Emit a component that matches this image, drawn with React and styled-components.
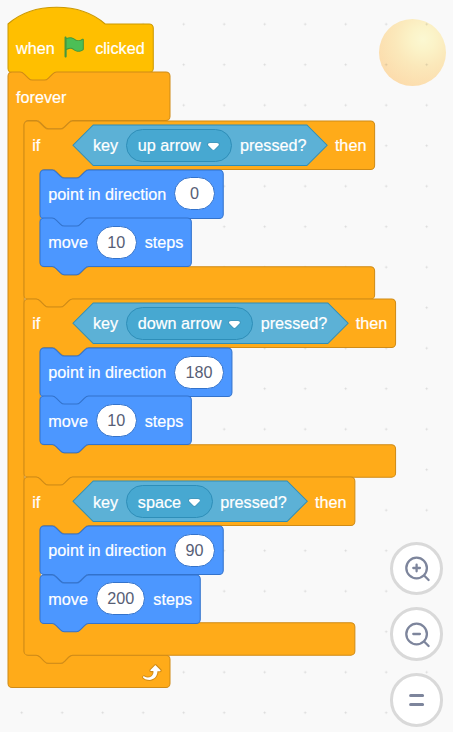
import React from 'react';
import styled, { createGlobalStyle } from 'styled-components';

const SCALE = 1.0125;
const u = (n) => `${n * SCALE}px`;

const palette = {
  event: { fill: '#ffbf00', stroke: '#cc9900' },
  control: { fill: '#ffab19', stroke: '#cf8b17' },
  motion: { fill: '#4c97ff', stroke: '#3373cc' },
  sensing: { fill: '#5cb1d6', stroke: '#2e8eb8', field: '#47a8d1' },
};

const GlobalStyle = createGlobalStyle`
  body {
    margin: 0;
    background: #f9f9f9;
  }
`;

const Workspace = styled.main`
  position: relative;
  box-sizing: border-box;
  width: 453px;
  height: 732px;
  padding: 23.8px 0 0 7.9px;
  overflow: hidden;
  background: #f9f9f9;
  font-family: 'Liberation Sans', Arial, sans-serif;
  font-size: ${u(16)};
  color: #fff;
`;

const Sun = styled.div`
  position: absolute;
  left: 378.8px;
  top: 18.6px;
  width: 67.4px;
  height: 67.4px;
  border-radius: 50%;
  background: radial-gradient(circle at 44px 20px, #fbf8d2 0, #fbf3c8 12px, #fbe8ba 28px, #fcdbab 52px, #fcd7a7 64px);
`;

const DotGrid = styled.div`
  position: absolute;
  inset: 0;
  background-image: radial-gradient(circle at 1.5px 1.5px, rgba(0, 0, 0, 0.13) 0.6px, transparent 1.4px);
  background-size: 40.5px 40.5px;
  background-position: 20.2px 22.7px;
`;

const Script = styled.div`
  position: relative;
  display: flex;
  flex-direction: column;
  align-items: flex-start;
`;

const BlockBox = styled.div`
  position: relative;
  width: ${(p) => u(p.$width)};
`;

const Outline = styled.svg`
  position: absolute;
  left: 0;
  top: 0;
  width: ${(p) => u(p.$width)};
  height: ${(p) => u(p.$height)};
  overflow: visible;
  fill: ${(p) => p.$tone.fill};
  stroke: ${(p) => p.$tone.stroke};
  stroke-width: 1;
`;

const Row = styled.div`
  position: relative;
  box-sizing: border-box;
  display: flex;
  align-items: center;
  gap: ${u(8)};
  height: ${u(48)};
  padding: 0 ${u(8)};
  white-space: nowrap;
`;

const Label = styled.span`
  flex: none;
  width: ${(p) => (p.$width ? u(p.$width) : 'auto')};
  line-height: ${u(20)};
  -webkit-text-stroke: 0.2px currentColor;
`;

const NumberField = styled.span`
  flex: none;
  box-sizing: border-box;
  width: ${(p) => u(p.$width)};
  height: ${u(32.6)};
  line-height: ${u(31)};
  border: 1px solid ${palette.motion.stroke};
  border-radius: ${u(17)};
  background: #fff;
  color: #575e75;
  text-align: center;
`;

const Condition = styled.div`
  position: relative;
  flex: none;
  box-sizing: border-box;
  width: ${(p) => u(p.$width)};
  height: ${u(40)};
  padding: 0 ${u(20)};
  display: flex;
  align-items: center;
  gap: ${u(8)};

  > span {
    position: relative;
  }
`;

const Dropdown = styled.span`
  flex: none;
  box-sizing: border-box;
  display: flex;
  align-items: center;
  justify-content: space-between;
  width: ${(p) => u(p.$width + 1)};
  height: ${u(33)};
  margin: 0 ${u(-0.5)};
  padding: 0 ${u(11)} 0 ${u(11)};
  border: 1px solid ${palette.sensing.stroke};
  border-radius: ${u(17)};
  background: ${palette.sensing.field};
`;

const Stack = styled.div`
  position: relative;
  display: flex;
  flex-direction: column;
  align-items: flex-start;
  padding-left: ${u(16)};
`;

const Footer = styled.div`
  position: relative;
  display: flex;
  align-items: center;
  justify-content: flex-end;
  box-sizing: border-box;
  height: ${u(32)};
  padding-right: ${u(8)};
`;

const Glyph = styled.svg`
  flex: none;
  display: block;
  width: ${(p) => u(p.$w)};
  height: ${(p) => u(p.$h)};
  margin: ${(p) => p.$margin || 0};
`;

const ZoomControls = styled.div`
  position: absolute;
  right: 9.7px;
  top: 541.5px;
  display: flex;
  flex-direction: column;
  gap: 12.4px;
`;

const ZoomButton = styled.button`
  display: flex;
  align-items: center;
  justify-content: center;
  box-sizing: border-box;
  width: 53.6px;
  height: 53.6px;
  padding: 0;
  border: 3px solid #d9d9d9;
  border-radius: 50%;
  background: #fff;
  background-clip: padding-box;
`;

const ZoomIcon = styled.svg`
  flex: none;
  display: block;
  width: 28px;
  height: 28px;
  overflow: visible;
  fill: none;
  stroke: #7d859c;
  stroke-width: ${(p) => p.$weight || 2.3};
  stroke-linecap: round;
`;

const NOTCH = 'c2,0 3,1 4,2 l4,4 c1,1 2,2 4,2 h12 c2,0 3,-1 4,-2 l4,-4 c1,-1 2,-2 4,-2';
const NOTCH_BACK = 'c-2,0 -3,1 -4,2 l-4,4 c-1,1 -2,2 -4,2 h-12 c-2,0 -3,-1 -4,-2 l-4,-4 c-1,-1 -2,-2 -4,-2';
const TOP = `M0,4 A4,4 0 0,1 4,0 H12 ${NOTCH}`;
const BOTTOM = `H48 ${NOTCH_BACK} H4 a4,4 0 0,1 -4,-4 z`;
const side = (w, h) => `H${w - 4} a4,4 0 0,1 4,4 v${h - 8} a4,4 0 0,1 -4,4`;

const shapes = {
  stack: (w) => `${TOP} ${side(w, 48)} ${BOTTOM}`,
  hat: (w) => `M0,0 c25,-22 71,-22 96,0 ${side(w, 48)} ${BOTTOM}`,
  loop: (w, inner, cap) =>
    `${TOP} ${side(w, 48)} H64 ${NOTCH_BACK} h-8 a4,4 0 0,0 -4,4 v${inner - 8} a4,4 0 0,0 4,4 h8 ${NOTCH} ` +
    `${side(w, 32)} ${cap ? 'H4 a4,4 0 0,1 -4,-4 z' : BOTTOM}`,
};

function Shape({ width, height, tone, d }) {
  return (
    <Outline $width={width} $height={height} $tone={tone} viewBox={`0 0 ${width} ${height}`} aria-hidden="true">
      <path d={d} />
    </Outline>
  );
}

function CommandBlock({ width, before, value, fieldWidth, after }) {
  return (
    <BlockBox $width={width}>
      <Shape width={width} height={48} tone={palette.motion} d={shapes.stack(width)} />
      <Row>
        <Label>{before}</Label>
        <NumberField $width={fieldWidth}>{value}</NumberField>
        {after && <Label>{after}</Label>}
      </Row>
    </BlockBox>
  );
}

function DropdownArrow() {
  return (
    <Glyph $w={12.71} $h={8.79} $margin="1.4px 0 0" viewBox="0 0 12.71 8.79">
      <path
        fill="#231f20"
        opacity="0.1"
        d="M12.71,2.44A2.41,2.41,0,0,1,12,4.16L8.08,8.08a2.45,2.45,0,0,1-3.45,0L0.72,4.16A2.42,2.42,0,0,1,0,2.44,2.48,2.48,0,0,1,.71,.71C1,0.47,1.43,0,6.36,0S11.75,0.46,12,.71A2.44,2.44,0,0,1,12.71,2.44Z"
      />
      <path
        fill="#fff"
        d="M6.36,7.79a1.43,1.43,0,0,1-1-.42L1.42,3.45a1.44,1.44,0,0,1,0-2c0.56-.56,9.31-0.56,9.87,0a1.44,1.44,0,0,1,0,2L7.37,7.37A1.43,1.43,0,0,1,6.36,7.79Z"
      />
    </Glyph>
  );
}

function KeyPressed({ width, keyName, fieldWidth }) {
  return (
    <Condition $width={width}>
      <Shape
        width={width}
        height={40}
        tone={palette.sensing}
        d={`M20,0 H${width - 20} l20,20 l-20,20 H20 l-20,-20 z`}
      />
      <Label>key</Label>
      <Dropdown $width={fieldWidth}>
        <Label>{keyName}</Label>
        <DropdownArrow />
      </Dropdown>
      <Label>pressed?</Label>
    </Condition>
  );
}

function IfBlock({ width, condition, children }) {
  return (
    <BlockBox $width={width}>
      <Shape width={width} height={176} tone={palette.control} d={shapes.loop(width, 96, false)} />
      <Row>
        <Label $width={32}>if</Label>
        {condition}
        <Label>then</Label>
      </Row>
      <Stack>{children}</Stack>
      <Footer />
    </BlockBox>
  );
}

function ForeverBlock({ children }) {
  return (
    <BlockBox $width={160}>
      <Shape width={160} height={608} tone={palette.control} d={shapes.loop(160, 528, true)} />
      <Row>
        <Label>forever</Label>
      </Row>
      <Stack>{children}</Stack>
      <Footer>
        <Glyph $w={24} $h={24} $margin="0.8px 0 0" viewBox="0 0 24 24">
          <path
            fill="#cf8b17"
            d="M23.3,11c-0.3,0.6-0.9,1-1.5,1h-1.6c-0.1,1.3-0.5,2.5-1.1,3.6c-0.9,1.7-2.3,3.2-4.1,4.1c-1.7,0.9-3.6,1.2-5.5,0.9c-1.8-0.3-3.5-1.1-4.9-2.3c-0.7-0.7-0.7-1.9,0-2.6c0.6-0.6,1.6-0.7,2.3-0.2H7c0.9,0.6,1.9,0.9,2.9,0.9s1.9-0.3,2.7-0.9c1.1-0.8,1.8-2.1,1.8-3.5h-1.5c-0.9,0-1.7-0.7-1.7-1.7c0-0.4,0.2-0.9,0.5-1.2l4.4-4.4c0.7-0.6,1.7-0.6,2.4,0L23,9.2C23.5,9.7,23.6,10.4,23.3,11z"
          />
          <path
            fill="#fff"
            d="M21.8,11h-2.6c0,1.5-0.3,2.9-1,4.2c-0.8,1.6-2.1,2.8-3.7,3.6c-1.5,0.8-3.3,1.1-4.9,0.8c-1.6-0.2-3.2-1-4.4-2.1c-0.4-0.3-0.4-0.9-0.1-1.2c0.3-0.4,0.9-0.4,1.2-0.1c1,0.7,2.2,1.1,3.4,1.1s2.3-0.3,3.3-1c0.9-0.6,1.6-1.5,2-2.6c0.3-0.9,0.4-1.8,0.2-2.8h-2.4c-0.4,0-0.7-0.3-0.7-0.7c0-0.2,0.1-0.3,0.2-0.4l4.4-4.4c0.3-0.3,0.7-0.3,0.9,0L22,9.8c0.3,0.3,0.4,0.6,0.3,0.9S22,11,21.8,11z"
          />
        </Glyph>
      </Footer>
    </BlockBox>
  );
}

function WhenFlagClicked() {
  return (
    <BlockBox $width={143.5}>
      <Shape width={143.5} height={48} tone={palette.event} d={shapes.hat(143.5)} />
      <Row>
        <Label>when</Label>
        <Glyph $w={24} $h={24} $margin="0 0.5px 1.6px -0.5px" viewBox="0 0 24 24">
          <path
            fill="#45993d"
            d="M20.8 3.7c-.4-.2-.9-.1-1.2.2-2 1.6-4.8 1.6-6.8 0-2.3-1.9-5.6-2.3-8.3-1v-.4c0-.6-.5-1-1-1s-1 .4-1 1v18.8c0 .5.5 1 1 1h.1c.5 0 1-.5 1-1v-6.4c1-.7 2.1-1.2 3.4-1.3 1.2 0 2.4.4 3.4 1.2 2.9 2.3 7 2.3 9.8 0 .3-.2.4-.5.4-.9V4.7c0-.5-.3-.9-.8-1z"
          />
          <path
            fill="#4cbf56"
            d="M20.6 4.8l-.1 9.1v.1c-2.5 2-6.1 2-8.6 0-1.1-.9-2.5-1.4-4-1.4-1.2.1-2.3.5-3.4 1.1V4c2.5-1.4 5.5-1.1 7.7.6 2.4 1.9 5.7 1.9 8.1 0h.2c0 .1.1.1.1.2z"
          />
        </Glyph>
        <Label>clicked</Label>
      </Row>
    </BlockBox>
  );
}

const branches = [
  {
    width: 346.3, key: 'up arrow', condition: 251, field: 104.3,
    direction: 0, directionWidth: 181, directionField: 40,
    steps: 10, moveWidth: 149.5, moveField: 40,
  },
  {
    width: 367, key: 'down arrow', condition: 271.7, field: 124.8,
    direction: 180, directionWidth: 189.6, directionField: 48.6,
    steps: 10, moveWidth: 149.5, moveField: 40,
  },
  {
    width: 326.8, key: 'space', condition: 231.4, field: 84.8,
    direction: 90, directionWidth: 181, directionField: 40,
    steps: 200, moveWidth: 158.3, moveField: 48.6,
  },
];

export default function App() {
  return (
    <>
      <GlobalStyle />
      <Workspace>
        <Sun />
        <DotGrid />
        <Script>
          <WhenFlagClicked />
          <ForeverBlock>
            {branches.map((b) => (
              <IfBlock
                key={b.key}
                width={b.width}
                condition={<KeyPressed width={b.condition} keyName={b.key} fieldWidth={b.field} />}
              >
                <CommandBlock
                  width={b.directionWidth}
                  before="point in direction"
                  value={b.direction}
                  fieldWidth={b.directionField}
                />
                <CommandBlock
                  width={b.moveWidth}
                  before="move"
                  value={b.steps}
                  fieldWidth={b.moveField}
                  after="steps"
                />
              </IfBlock>
            ))}
          </ForeverBlock>
        </Script>
        <ZoomControls>
          <ZoomButton aria-label="Zoom in">
            <ZoomIcon viewBox="0 0 28 28">
              <circle cx="13.6" cy="14" r="10.3" />
              <path d="M21.6 22l4 4M13.6 10.7v6.6M10.3 14h6.6" />
            </ZoomIcon>
          </ZoomButton>
          <ZoomButton aria-label="Zoom out">
            <ZoomIcon viewBox="0 0 28 28">
              <circle cx="13.6" cy="14" r="10.3" />
              <path d="M21.6 22l4 4M10.3 14h6.6" />
            </ZoomIcon>
          </ZoomButton>
          <ZoomButton aria-label="Reset zoom">
            <ZoomIcon $weight={3} viewBox="0 0 28 28">
              <path d="M7.6 9.5h12M7.6 18.5h12" />
            </ZoomIcon>
          </ZoomButton>
        </ZoomControls>
      </Workspace>
    </>
  );
}
